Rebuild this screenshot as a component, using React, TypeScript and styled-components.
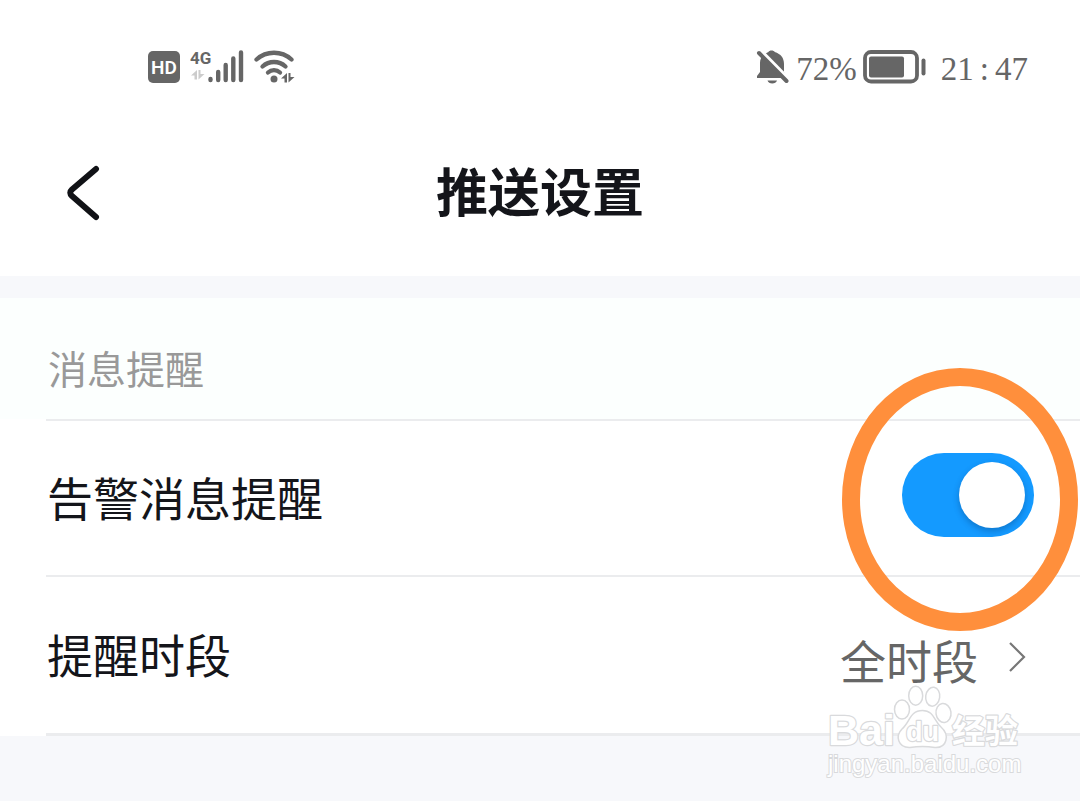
import React, { useState } from "react";
import styled, { createGlobalStyle } from "styled-components";

const GlobalStyle = createGlobalStyle`
  * { box-sizing: border-box; }
  body {
    margin: 0;
    background: #f7f8fb;
    color: #14151a;
    font-family: "Noto Sans CJK SC", "Noto Sans", sans-serif;
  }
  button { font: inherit; color: inherit; background: none; border: 0; padding: 0; cursor: pointer; }
`;

const Page = styled.div`
  display: flex;
  flex-direction: column;
  min-height: 100vh;
`;

const StatusBar = styled.div`
  display: flex;
  justify-content: space-between;
  align-items: center;
  height: 110px;
  padding: 24px 52px 0 148px;
  background: #fff;
  color: #666;
`;

const StatusGroup = styled.div<{ $gap: number }>`
  display: flex;
  align-items: center;
  gap: ${(p) => p.$gap}px;
`;

const StatusText = styled.span`
  padding-top: 4px;
  font-family: "Liberation Serif", serif;
  font-size: 33px;
  line-height: 36px;
`;

const Clock = styled(StatusText)`
  margin-left: 9px;
`;

const Colon = styled.span`
  padding: 0 6px;
`;

const Header = styled.header`
  display: grid;
  grid-template-columns: 100px 1fr 100px;
  align-items: center;
  height: 166px;
  background: #fff;
`;

const BackButton = styled.button`
  display: flex;
  justify-content: flex-end;
`;

const Title = styled.h1`
  margin: 0;
  padding-bottom: 6px;
  text-align: center;
  font-size: 52px;
  line-height: 64px;
  font-weight: 700;
`;

const SectionHeading = styled.h2`
  margin: 22px 0 0;
  padding: 16px 0 0 48px;
  height: 121px;
  display: flex;
  align-items: center;
  background: #fcfffe;
  color: #999;
  font-size: 39px;
  line-height: 48px;
  font-weight: 400;
`;

const List = styled.div`
  background: #fff;
`;

const Row = styled.div`
  position: relative;
  display: flex;
  align-items: center;
  justify-content: space-between;
  height: 156px;
  margin-left: 46px;
  padding-right: 46px;
  border-top: 2px solid #ebecee;
`;

const LinkRow = styled(Row).attrs({ as: "button", type: "button" })`
  width: calc(100% - 46px);
  height: 161px;
  border-top: 2px solid #ebecee;
  border-bottom: 3px solid #ebecee;
  padding-right: 54px;
  text-align: left;
`;

const RowLabel = styled.label`
  padding: 0 0 4px 1px;
  font-size: 46px;
  line-height: 56px;
  font-weight: 400;
`;

const RowValue = styled.span`
  display: flex;
  align-items: center;
  gap: 30px;
  padding-top: 4px;
  color: #666;
  font-size: 46px;
  line-height: 56px;
`;

const ValueText = styled.span`
  padding-top: 4px;
`;

const Switch = styled.input.attrs({ type: "checkbox", role: "switch" })`
  appearance: none;
  display: flex;
  align-items: center;
  width: 132px;
  height: 84px;
  margin: 0 0 6px;
  padding: 0 9px;
  border-radius: 42px;
  background: #ccc;
  cursor: pointer;

  &::before {
    content: "";
    width: 66px;
    height: 66px;
    border-radius: 50%;
    background: #fff;
    box-shadow: 0 3px 6px rgba(0, 40, 90, 0.3);
  }
  &:checked { background: #149aff; justify-content: flex-end; }
`;

const Highlight = styled.div`
  position: absolute;
  z-index: 1;
  top: -53px;
  right: 2px;
  width: 236px;
  height: 263px;
  border: 18px solid #ff8f3c;
  border-radius: 50%;
  pointer-events: none;
`;

const Anchor = styled.div`
  position: relative;
`;

const Watermark = styled.svg`
  position: absolute;
  right: 56px;
  bottom: -44px;
  pointer-events: none;
`;

const Arrows = ({ x, y, fill }: { x: number; y: number; fill: string }) => (
  <path
    transform={`translate(${x} ${y})`}
    fill={fill}
    d="M6 0V9.500H3.500V5.500H0ZM7.500 0H9.500V4H13.500L7.500 9.500Z"
  />
);

const HdIcon = () => (
  <svg width="32" height="32" viewBox="0 0 32 32" role="img" aria-label="HD">
    <rect width="32" height="32" rx="5" fill="#666" />
    <text x="16" y="23" textAnchor="middle" fill="#fff" fontFamily="Roboto, sans-serif" fontWeight="600" fontSize="19">HD</text>
  </svg>
);

const SignalIcon = () => (
  <svg width="54" height="40" viewBox="0 -3 54 40" role="img" aria-label="4G">
    <text x="0" y="14" fill="#666" fontFamily="Roboto, sans-serif" fontWeight="700" fontSize="17">4G</text>
    <Arrows x={1} y={20} fill="#ccc" />
    <g stroke="#666" strokeWidth="4.400" strokeLinecap="round">
      <path d="M20.500 29V30M28.200 22V30M35.700 15V30M43.300 8.500V30M51 2.500V30" />
    </g>
  </svg>
);

const WifiIcon = () => (
  <svg width="42" height="36" viewBox="0 0 42 36" aria-hidden="true">
    <g fill="none" stroke="#666" strokeWidth="4.300" strokeLinecap="round">
      <path d="M2.500 10.500A26 26 0 0 1 37.500 10.500" />
      <path d="M8.500 17.500A17 17 0 0 1 31.500 17.500" />
      <path d="M14 23.500A9 9 0 0 1 26 23.500" />
    </g>
    <circle cx="20" cy="30" r="3.500" fill="#666" />
    <Arrows x={27} y={24} fill="#666" />
  </svg>
);

const MutedBellIcon = () => (
  <svg width="34" height="36" viewBox="0 0 34 36" aria-hidden="true">
    <path fill="#666" d="M12.500 3C13 1 18 1 18.700 3C25 5 28 9 28 15V23L31 28V29H1V27L4 23V14C4 9 7 5 12.500 3ZM11.500 31.500H21C20 35.500 12.500 35.500 11.500 31.500Z" />
    <path stroke="#fff" strokeWidth="4" d="M4 1L35 32.500" />
    <path stroke="#666" strokeWidth="4" strokeLinecap="round" d="M3 4L30.500 32" />
  </svg>
);

const BatteryIcon = () => (
  <svg width="63" height="34" viewBox="0 0 63 34" aria-hidden="true">
    <rect x="2" y="2" width="52" height="29.500" rx="6" fill="none" stroke="#666" strokeWidth="3.800" />
    <rect x="6" y="6.500" width="35" height="21" rx="2" fill="#666" />
    <rect x="58.500" y="8.500" width="4" height="17" rx="2" fill="#666" />
  </svg>
);

const WatermarkArt = () => (
  <Watermark width="200" height="100" viewBox="0 0 200 100">
    <g fill="#fff" stroke="#d9dadc" strokeWidth="1.500">
      <ellipse cx="78" cy="29.500" rx="7.500" ry="9.500" />
      <ellipse cx="91.700" cy="15.700" rx="7" ry="9.500" />
      <ellipse cx="108.700" cy="16.700" rx="7" ry="9.500" transform="rotate(8 108.700 16.700)" />
      <ellipse cx="119.500" cy="33" rx="7.500" ry="9.500" transform="rotate(-8 119.500 33)" />
      <path d="M98.500 30.500C110 30.500 110 41 117 47C126 55 123 68 111 67.500C104 66.500 93 66.500 86 67.500C74 68 71 56 78 49C86 42 86 30.500 98.500 30.500Z" />
      <g fontFamily='"Liberation Sans", sans-serif' fontWeight="700" paintOrder="stroke" strokeWidth="2.400" strokeLinejoin="round">
        <text x="4" y="65" fontSize="43">Bai</text>
        <text x="82" y="61" fontSize="27">du</text>
        <text x="128" y="63" fontSize="33" fontFamily='"Noto Sans CJK SC", sans-serif'>经验</text>
      </g>
      <text x="4" y="92" fontSize="24" fontFamily='"Liberation Sans", sans-serif' paintOrder="stroke" strokeWidth="2">jingyan.baidu.com</text>
    </g>
  </Watermark>
);

export default function App() {
  const [alerts, setAlerts] = useState(true);

  return (
    <>
      <GlobalStyle />
      <Page>
        <StatusBar>
          <StatusGroup $gap={10}>
            <HdIcon />
            <SignalIcon />
            <WifiIcon />
          </StatusGroup>
          <StatusGroup $gap={6}>
            <MutedBellIcon />
            <StatusText>72%</StatusText>
            <BatteryIcon />
            <Clock>
              21<Colon>:</Colon>47
            </Clock>
          </StatusGroup>
        </StatusBar>
        <Header>
          <BackButton type="button" aria-label="返回">
            <svg width="34" height="56" viewBox="0 0 34 56" fill="none" stroke="#111216" strokeWidth="6" strokeLinecap="round" strokeLinejoin="round">
              <path d="M30 4L6 24.500Q2.500 27.700 6 31L30 52" />
            </svg>
          </BackButton>
          <Title>推送设置</Title>
        </Header>
        <main>
          <SectionHeading>消息提醒</SectionHeading>
          <List>
            <Row>
              <RowLabel htmlFor="alerts">告警消息提醒</RowLabel>
              <Switch id="alerts" checked={alerts} onChange={(e) => setAlerts(e.target.checked)} />
              <Highlight />
            </Row>
            <Anchor>
              <LinkRow>
                <RowLabel as="span">提醒时段</RowLabel>
                <RowValue>
                  <ValueText>全时段</ValueText>
                  <svg width="18" height="30" viewBox="0 0 18 30" fill="none" stroke="#777" strokeWidth="2.200">
                    <path d="M2 1L16 15L2 29" />
                  </svg>
                </RowValue>
              </LinkRow>
              <WatermarkArt />
            </Anchor>
          </List>
        </main>
      </Page>
    </>
  );
}
